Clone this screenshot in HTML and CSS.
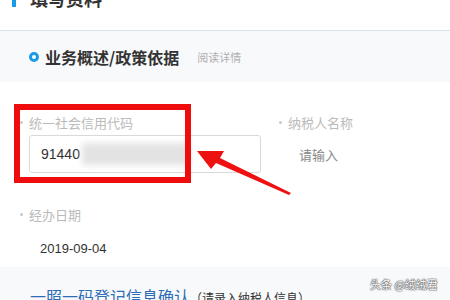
FILE: index.html
```html
<!DOCTYPE html>
<html lang="zh">
<head>
<meta charset="utf-8">
<link rel="stylesheet" href="styles.css">
</head>
<body>
<div class="page">
  <div class="header">
    <span class="bar"></span>
    <span class="title">填写资料</span>
  </div>
  <div class="sec">
    <span class="ring"></span>
    <span class="sec-title">业务概述/政策依据</span>
    <span class="sec-link">阅读详情</span>
  </div>
  <div class="form">
    <div class="field">
      <div class="label"><span class="dot"></span>统一社会信用代码</div>
      <div class="input"><span>91440</span><span class="blur"></span></div>
    </div>
    <div class="field">
      <div class="label"><span class="dot"></span>纳税人名称</div>
      <div class="value muted">请输入</div>
    </div>
    <div class="field">
      <div class="label"><span class="dot"></span>经办日期</div>
      <div class="value date">2019-09-04</div>
    </div>
  </div>
  <div class="foot">
    <span class="link">一照一码登记信息确认</span><span class="note">（请录入纳税人信息）</span>
  </div>
  <div class="redbox"></div>
  <svg class="arrow" width="450" height="300" viewBox="0 0 450 300">
    <polygon points="197,151 224,151 220,158 291,193 289,195 216,163 211,169" fill="#ee1111"/>
  </svg>
  <div class="mark">头条 @绒绒君</div>
</div>
</body>
</html>
```
FILE: styles.css
```css
* { box-sizing: border-box; }
html, body { margin: 0; padding: 0; }
body {
  font-family: "Noto Sans CJK SC", "Liberation Sans", sans-serif;
  background: #fff;
  width: 450px;
  height: 300px;
  overflow: hidden;
}
.page { position: relative; width: 450px; height: 300px; overflow: hidden; }
.header {
  height: 31px;
  border-bottom: 1px solid #d6e2ec;
  display: flex;
  align-items: flex-start;
  padding-left: 12px;
}
.bar {
  width: 4px;
  height: 20px;
  margin-top: -13px;
  background: #1a9be8;
}
.title {
  margin-left: 14px;
  margin-top: -12px;
  font-size: 18px;
  line-height: 20px;
  font-weight: bold;
  color: #333;
}
.sec {
  height: 51px;
  background: #f8f9fb;
  display: flex;
  align-items: center;
  padding-left: 29px;
}
.ring {
  width: 10px;
  height: 10px;
  border: 3px solid #1a9be8;
  border-radius: 50%;
  background: #fff;
}
.sec-title {
  margin-left: 6px;
  font-size: 16px;
  font-weight: bold;
  color: #333;
}
.sec-link {
  margin-left: 18px;
  font-size: 11px;
  color: #b0b0b0;
}
.form {
  display: grid;
  grid-template-columns: 259px 1fr;
  padding: 30px 0 0 20px;
  height: 185px;
  row-gap: 31px;
}
.label {
  display: flex;
  align-items: center;
  gap: 6px;
  height: 20px;
  font-size: 13px;
  color: #bbb;
}
.dot {
  width: 3px;
  height: 3px;
  border-radius: 50%;
  background: #c8c8c8;
}
.input {
  margin: 3px 0 0 9px;
  width: 232px;
  height: 38px;
  border: 1px solid #d9d9d9;
  border-radius: 3px;
  display: flex;
  align-items: center;
  padding-left: 11px;
  font-family: "Liberation Sans", sans-serif;
  font-size: 14px;
  color: #333;
}
.blur {
  display: inline-block;
  width: 108px;
  height: 22px;
  margin-left: 2px;
  background: #e3e3e3;
  filter: blur(3px);
}
.value {
  margin: 3px 0 0 20px;
  height: 38px;
  display: flex;
  align-items: center;
  font-size: 13px;
}
.muted { color: #888; }
.date {
  margin: 5px 0 0 20px;
  color: #333;
  font-family: "Liberation Sans", sans-serif;
}
.foot {
  height: 33px;
  background: #f8f9fb;
  padding: 20px 0 0 30px;
  line-height: 18px;
  white-space: nowrap;
}
.link { font-size: 16px; color: #2e6db6; }
.note { font-size: 12px; color: #333; }
.redbox {
  position: absolute;
  left: 14px;
  top: 104px;
  width: 177px;
  height: 79px;
  border: 6px solid #ee0c0c;
}
.arrow { position: absolute; left: 0; top: 0; }
.mark {
  position: absolute;
  left: 370px;
  top: 277px;
  font-size: 11px;
  line-height: 15px;
  color: #fff;
  text-shadow: 0 0 1px #444, 0 0 1px #444, 0 0 2px #666;
  white-space: nowrap;
}
```
